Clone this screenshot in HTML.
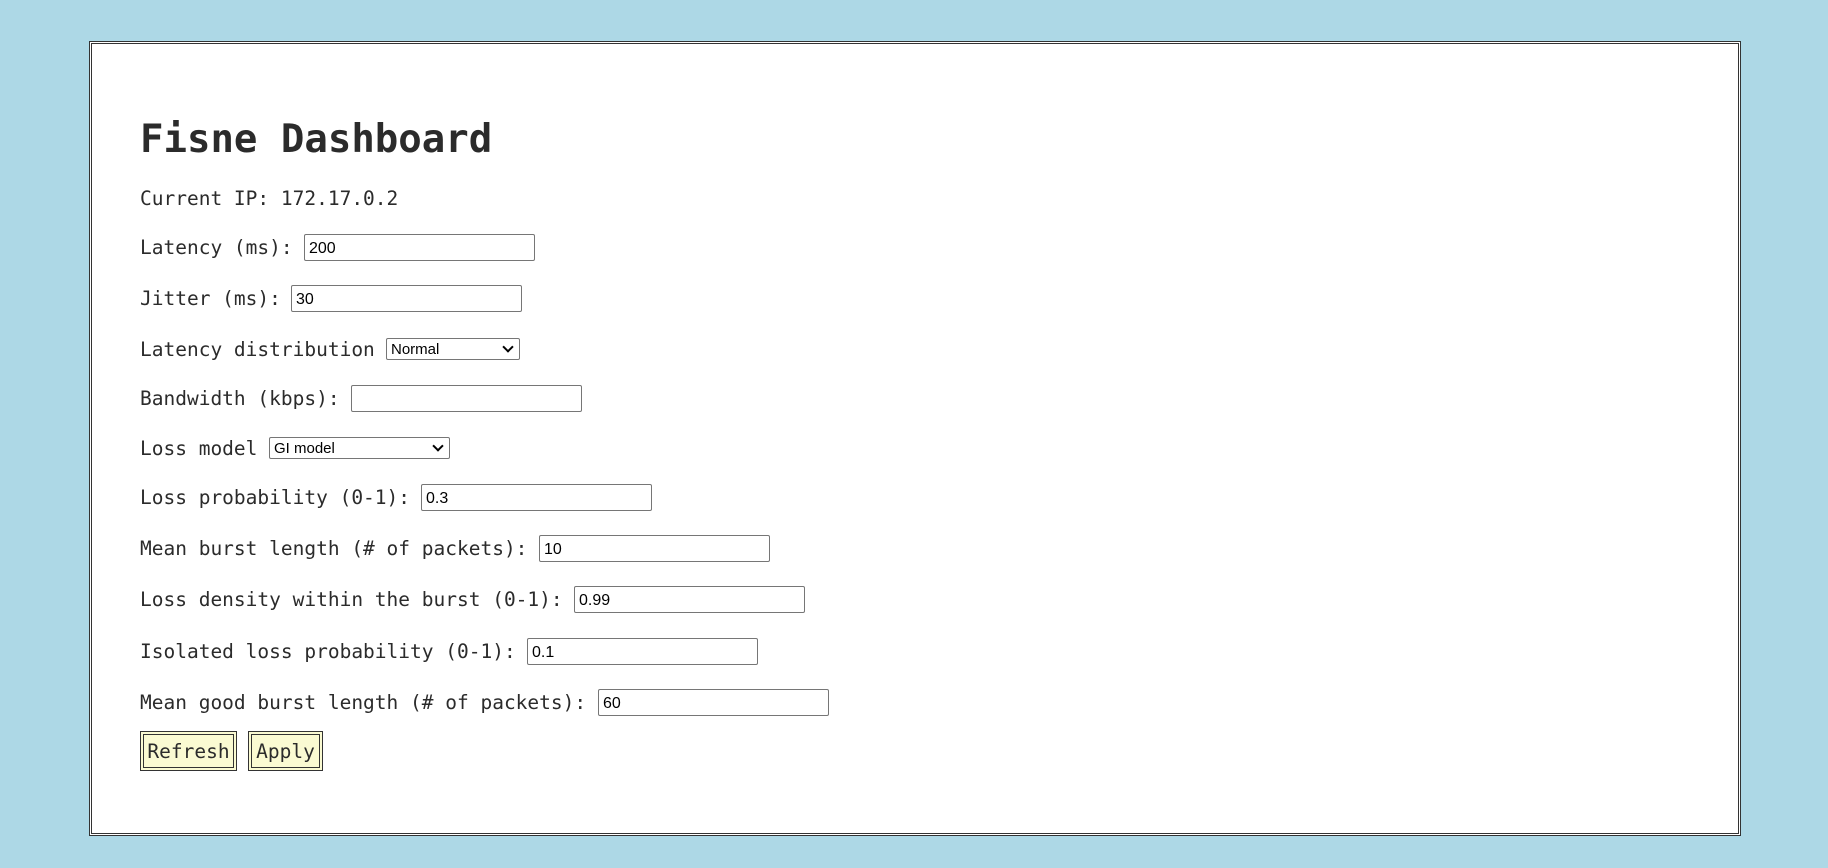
<!DOCTYPE html>
<html><head><style>
html,body{margin:0;padding:0;}
body{width:1828px;height:868px;background:#add8e6;position:relative;overflow:hidden;font-family:"DejaVu Sans Mono","Liberation Mono",monospace;color:#2b2b2b;}
.box{position:absolute;left:89px;top:41px;width:1646px;height:789px;border:3px double #333;background:#fff;}
h1{position:absolute;left:140px;top:110px;margin:0;font-size:39px;font-weight:bold;line-height:60px;color:#2b2b2b;}
.row{position:absolute;left:140px;height:28px;display:flex;align-items:center;font-size:19.5px;white-space:pre;}
.in{position:absolute;height:27px;width:231px;box-sizing:border-box;border:1px solid #767676;border-radius:2px;font-family:"Liberation Sans",sans-serif;font-size:16px;padding:1px 4px 0;line-height:25px;color:#000;background:#fff;}
.sel{position:absolute;height:22px;box-sizing:border-box;border:1px solid #767676;border-radius:2px;font-family:"Liberation Sans",sans-serif;font-size:15px;padding:1px 4px 0;line-height:20px;color:#000;background:#fff;}
.sel:after{content:"";position:absolute;right:7px;top:4px;width:6px;height:6px;border-right:2px solid #000;border-bottom:2px solid #000;transform:rotate(45deg);}
.btn{position:absolute;top:731px;height:40px;box-sizing:border-box;border:4px double #333;background:#fafad2;font-size:19.5px;display:flex;align-items:center;justify-content:center;}
</style></head><body>
<div class="box"></div>
<h1>Fisne Dashboard</h1>
<div class="row" style="top:184px">Current IP: 172.17.0.2</div>
<div class="row" style="top:233px">Latency (ms): </div><div class="in" style="left:304px;top:234px">200</div>
<div class="row" style="top:284px">Jitter (ms): </div><div class="in" style="left:291px;top:285px">30</div>
<div class="row" style="top:335px">Latency distribution </div><div class="sel" style="left:386px;top:338px;width:134px">Normal</div>
<div class="row" style="top:384px">Bandwidth (kbps): </div><div class="in" style="left:351px;top:385px"></div>
<div class="row" style="top:434px">Loss model </div><div class="sel" style="left:269px;top:437px;width:181px">GI model</div>
<div class="row" style="top:483px">Loss probability (0-1): </div><div class="in" style="left:421px;top:484px">0.3</div>
<div class="row" style="top:534px">Mean burst length (# of packets): </div><div class="in" style="left:539px;top:535px">10</div>
<div class="row" style="top:585px">Loss density within the burst (0-1): </div><div class="in" style="left:574px;top:586px">0.99</div>
<div class="row" style="top:637px">Isolated loss probability (0-1): </div><div class="in" style="left:527px;top:638px">0.1</div>
<div class="row" style="top:688px">Mean good burst length (# of packets): </div><div class="in" style="left:598px;top:689px">60</div>
<div class="btn" style="left:140px;width:97px">Refresh</div>
<div class="btn" style="left:248px;width:75px">Apply</div>
</body></html>
